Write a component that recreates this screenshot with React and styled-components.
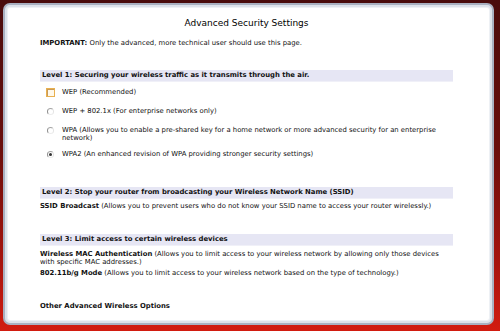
import React from "react";
import styled, { createGlobalStyle } from "styled-components";

const Global = createGlobalStyle`
  html, body { margin: 0; padding: 0; }
  body { width: 500px; height: 331px; overflow: hidden; font-family: "DejaVu Sans", Verdana, sans-serif; }
`;

const Stage = styled.div`
  width: 500px;
  height: 331px;
  box-sizing: border-box;
  padding: 3px 6px 6px 3px;
  background: linear-gradient(180deg, #4a0c0c 0%, #6a0e0c 45%, #a8140e 80%, #d21c10 100%);
  display: flex;
`;

const Panel = styled.div`
  flex: 1;
  box-sizing: border-box;
  background: #fff;
  border: 2px solid #a9b1c1;
  border-radius: 7px;
  box-shadow: inset 0 0 0 2px #dde2ea, inset 0 0 0 3px #eef1f5;
  padding: 12px 39px 0 35px;
  color: #111;
  font-size: 6.85px;
  line-height: 8px;
`;

const Title = styled.h1`
  margin: 0 0 10px;
  text-align: center;
  font-size: 9px;
  font-weight: normal;
  line-height: 12px;
  color: #000;
`;

const Intro = styled.p`
  margin: 0 0 23px;
`;

const Section = styled.section`
  margin-bottom: ${(p) => p.$gap}px;
`;

const Bar = styled.div`
  background: #e6e6f4;
  border-bottom: 1px solid #f0f0f8;
  font-weight: bold;
  height: 11px;
  line-height: 11px;
  padding-left: 2px;
  margin-bottom: ${(p) => p.$mb || 4}px;
`;

const OptionList = styled.div`
  display: flex;
  flex-direction: column;
  padding-left: 7px;
`;

const Option = styled.label`
  display: flex;
  align-items: flex-start;
  gap: 8px;
  margin-bottom: ${(p) => p.$mb}px;
`;

const Radio = styled.span`
  flex: none;
  box-sizing: border-box;
  width: 7px;
  height: 7px;
  margin-top: 1px;
  border-radius: 50%;
  border: 1px solid transparent;
  border-left-color: #8e8e8e;
  border-top-color: #a4a4a4;
  border-bottom-color: #ececec;
  border-right-color: #e4e4e4;
  display: flex;
  align-items: center;
  justify-content: center;
  &::after {
    content: "";
    display: ${(p) => (p.$checked ? "block" : "none")};
    width: 3px;
    height: 3px;
    border-radius: 50%;
    background: #333;
  }
`;

const FocusBox = styled.span`
  flex: none;
  box-sizing: border-box;
  width: 9px;
  height: 9px;
  margin: 0 -1px 0 -1px;
  border: 1px solid #e8b050;
  background: #fff8ea;
  box-shadow: inset 1px 1px 0 #c89a58;
`;

const Entry = styled.p`
  margin: 0 0 ${(p) => p.$mb || 0}px;
  padding-right: 14px;
`;

const Strong = styled.b`
  font-weight: bold;
`;

const OptionText = styled.span`
  padding-right: 10px;
`;

const options = [
  { label: "WEP (Recommended)", focus: true, mb: 10 },
  { label: "WEP + 802.1x (For enterprise networks only)", mb: 11 },
  {
    label:
      "WPA (Allows you to enable a pre-shared key for a home network or more advanced security for an enterprise network)",
    mb: 8,
  },
  { label: "WPA2 (An enhanced revision of WPA providing stronger security settings)", checked: true, mb: 0 },
];

export default function App() {
  return (
    <>
      <Global />
      <Stage>
        <Panel>
          <Title>Advanced Security Settings</Title>
          <Intro>
            <Strong>IMPORTANT:</Strong> Only the advanced, more technical user should use this page.
          </Intro>

          <Section $gap={29}>
            <Bar $mb={6}>Level 1: Securing your wireless traffic as it transmits through the air.</Bar>
            <OptionList>
              {options.map((o) => (
                <Option key={o.label} $mb={o.mb}>
                  {o.focus ? <FocusBox /> : <Radio $checked={o.checked} />}
                  <OptionText>{o.label}</OptionText>
                </Option>
              ))}
            </OptionList>
          </Section>

          <Section $gap={24}>
            <Bar $mb={3}>Level 2: Stop your router from broadcasting your Wireless Network Name (SSID)</Bar>
            <Entry>
              <Strong>SSID Broadcast</Strong> (Allows you to prevent users who do not know your SSID name to access your router wirelessly.)
            </Entry>
          </Section>

          <Section $gap={25}>
            <Bar $mb={4}>Level 3: Limit access to certain wireless devices</Bar>
            <Entry $mb={3}>
              <Strong>Wireless MAC Authentication</Strong> (Allows you to limit access to your wireless network by allowing only those devices with specific MAC addresses.)
            </Entry>
            <Entry>
              <Strong>802.11b/g Mode</Strong> (Allows you to limit access to your wireless network based on the type of technology.)
            </Entry>
          </Section>

          <Strong>Other Advanced Wireless Options</Strong>
        </Panel>
      </Stage>
    </>
  );
}
